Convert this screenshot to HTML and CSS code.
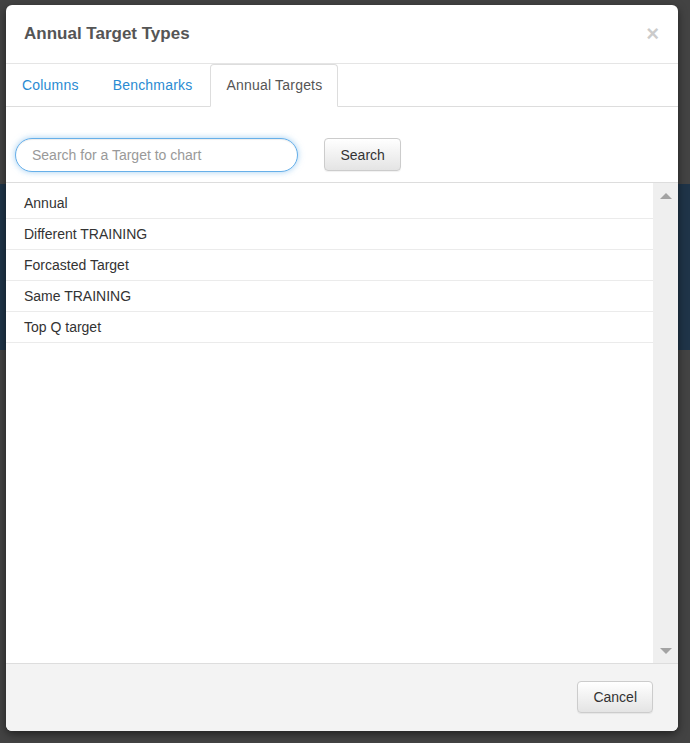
FILE: index.html
```html
<!DOCTYPE html>
<html lang="en">
<head>
  <meta charset="UTF-8">
  <meta name="viewport" content="width=device-width, initial-scale=1.0">
  <title>Annual Target Types</title>
  <link rel="stylesheet" href="styles.css">
</head>
<body>
  <div class="backdrop-band"></div>

  <div class="modal">
    <div class="modal-header">
      <h4 class="modal-title">Annual Target Types</h4>
      <span class="close">&times;</span>
    </div>

    <ul class="tabs">
      <li><a href="#">Columns</a></li>
      <li><a href="#">Benchmarks</a></li>
      <li class="active"><a href="#">Annual Targets</a></li>
    </ul>

    <div class="search-row">
      <input type="text" class="search-input" placeholder="Search for a Target to chart">
      <button class="btn btn-search">Search</button>
    </div>

    <div class="list-wrap">
      <ul class="target-list">
        <li>Annual</li>
        <li>Different TRAINING</li>
        <li>Forcasted Target</li>
        <li>Same TRAINING</li>
        <li>Top Q target</li>
      </ul>
      <div class="scrollbar">
        <span class="arrow-up"></span>
        <span class="arrow-down"></span>
      </div>
    </div>

    <div class="modal-footer">
      <button class="btn btn-cancel">Cancel</button>
    </div>
  </div>
</body>
</html>
```

FILE: styles.css
```css
html, body {
  height: 100%;
}
body {
  margin: 0;
  padding: 5px 12px 12px 6px;
  box-sizing: border-box;
  background: #434343;
  font-family: "Liberation Sans", Arial, sans-serif;
  font-size: 14px;
  color: #333;
  position: relative;
}
.backdrop-band {
  position: absolute;
  left: 0;
  right: 0;
  top: 184px;
  height: 166px;
  background: #1f3448;
  z-index: 0;
}
.modal {
  position: relative;
  z-index: 1;
  height: 100%;
  display: flex;
  flex-direction: column;
  background: #fff;
  border-radius: 6px;
  box-shadow: 0 3px 9px rgba(0, 0, 0, 0.5);
  overflow: hidden;
}
.modal-header {
  display: flex;
  align-items: center;
  justify-content: space-between;
  padding: 15px 19px 16px 18px;
  border-bottom: 1px solid #e5e5e5;
}
.modal-title {
  margin: 0;
  font-size: 17px;
  line-height: 27px;
  font-weight: bold;
  color: #555;
}
.close {
  font-size: 22px;
  font-weight: bold;
  line-height: 1;
  color: #000;
  opacity: 0.2;
}
.tabs {
  display: flex;
  margin: 0;
  padding: 0;
  list-style: none;
  border-bottom: 1px solid #ddd;
}
.tabs li {
  margin-bottom: -1px;
}
.tabs a {
  display: block;
  margin-right: 2px;
  padding: 10px 15px 11px;
  line-height: 20px;
  letter-spacing: 0.2px;
  border: 1px solid transparent;
  border-radius: 4px 4px 0 0;
  color: #2a8bd2;
  text-decoration: none;
}
.tabs .active a {
  color: #555;
  background: #fff;
  border-color: #ddd #ddd transparent;
}
.search-row {
  display: flex;
  align-items: flex-start;
  gap: 26px;
  padding: 31px 0 10px 9px;
}
.search-input {
  width: 283px;
  height: 34px;
  box-sizing: border-box;
  padding: 0 16px;
  border: 1px solid #66afe9;
  border-radius: 17px;
  outline: none;
  box-shadow: inset 0 1px 1px rgba(0, 0, 0, 0.075), 0 0 6px rgba(102, 175, 233, 0.6);
  font-family: inherit;
  font-size: 14px;
  color: #555;
}
.search-input::placeholder {
  color: #999;
}
.btn {
  height: 33px;
  padding: 0 15px;
  border: 1px solid #ccc;
  border-radius: 4px;
  background: linear-gradient(#fff, #e4e4e4);
  box-shadow: 0 1px 1px rgba(0, 0, 0, 0.06);
  font-family: inherit;
  font-size: 14px;
  color: #333;
  cursor: pointer;
}
.btn-search {
  padding: 0 15.5px;
}
.list-wrap {
  flex: 1;
  display: flex;
  border-top: 1px solid #ddd;
  min-height: 0;
}
.target-list {
  flex: 1;
  margin: 0;
  padding: 5px 0 0;
  list-style: none;
}
.target-list li {
  padding: 5px 18px;
  line-height: 20px;
  border-bottom: 1px solid #ebebeb;
}
.scrollbar {
  width: 25px;
  background: #efefef;
  display: flex;
  flex-direction: column;
  justify-content: space-between;
  align-items: center;
  padding: 10px 0 9px;
}
.arrow-up, .arrow-down {
  width: 0;
  height: 0;
  border-left: 6px solid transparent;
  border-right: 6px solid transparent;
}
.arrow-up {
  border-bottom: 6px solid #a3a3a3;
}
.arrow-down {
  border-top: 6px solid #a3a3a3;
}
.modal-footer {
  display: flex;
  justify-content: flex-end;
  padding: 17px 25px 18px;
  background: #f3f3f3;
  border-top: 1px solid #ddd;
}
.btn-cancel {
  height: 32px;
  padding: 0 15px;
}
```
